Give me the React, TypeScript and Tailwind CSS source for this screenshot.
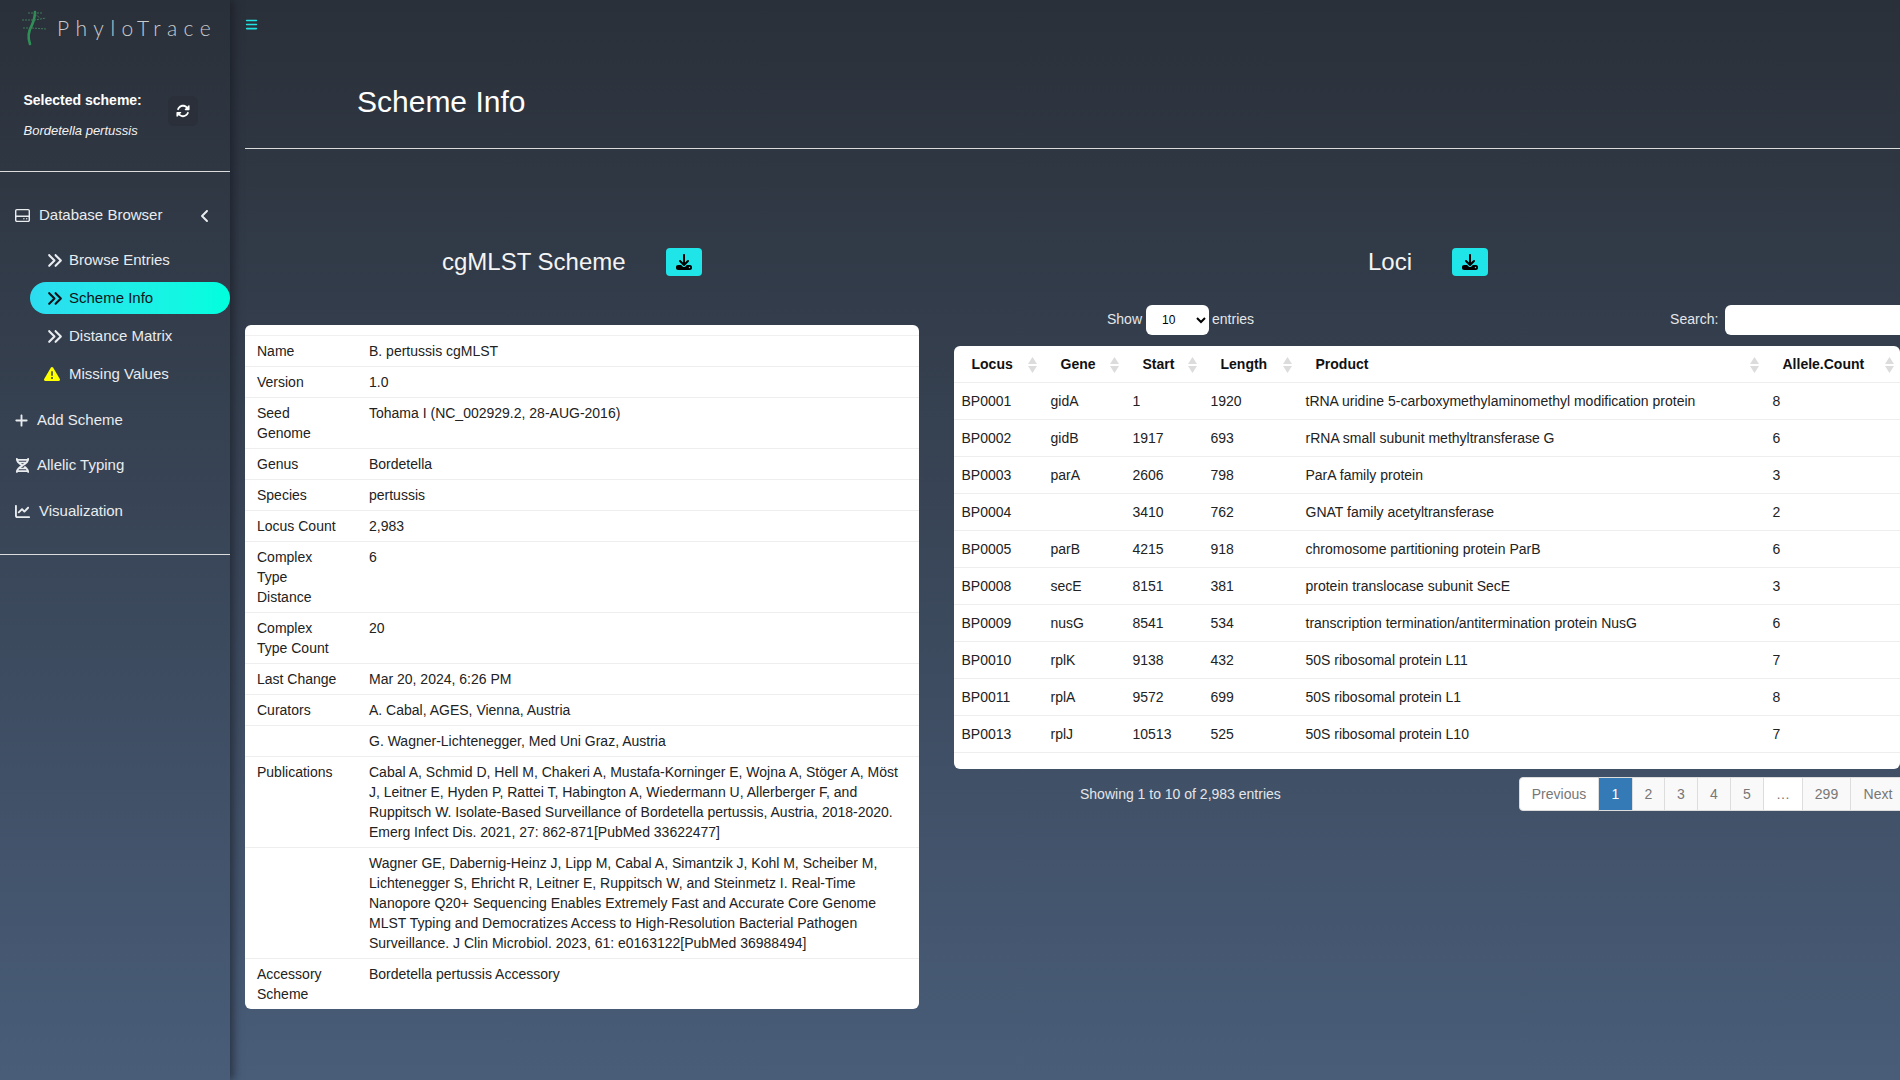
import {
  FaAngleLeft,
  FaAnglesRight,
  FaBars,
  FaChartLine,
  FaDna,
  FaDownload,
  FaPlus,
  FaRegHardDrive,
  FaRotate,
  FaTriangleExclamation,
} from "react-icons/fa6";

const schemeInfo = [
  ["Name", "B. pertussis cgMLST"],
  ["Version", "1.0"],
  ["Seed Genome", "Tohama I (NC_002929.2, 28-AUG-2016)"],
  ["Genus", "Bordetella"],
  ["Species", "pertussis"],
  ["Locus Count", "2,983"],
  ["Complex Type Distance", "6"],
  ["Complex Type Count", "20"],
  ["Last Change", "Mar 20, 2024, 6:26 PM"],
  ["Curators", "A. Cabal, AGES, Vienna, Austria"],
  ["", "G. Wagner-Lichtenegger, Med Uni Graz, Austria"],
  [
    "Publications",
    "Cabal A, Schmid D, Hell M, Chakeri A, Mustafa-Korninger E, Wojna A, Stöger A, Möst J, Leitner E, Hyden P, Rattei T, Habington A, Wiedermann U, Allerberger F, and Ruppitsch W. Isolate-Based Surveillance of Bordetella pertussis, Austria, 2018-2020. Emerg Infect Dis. 2021, 27: 862-871[PubMed 33622477]",
  ],
  [
    "",
    "Wagner GE, Dabernig-Heinz J, Lipp M, Cabal A, Simantzik J, Kohl M, Scheiber M, Lichtenegger S, Ehricht R, Leitner E, Ruppitsch W, and Steinmetz I. Real-Time Nanopore Q20+ Sequencing Enables Extremely Fast and Accurate Core Genome MLST Typing and Democratizes Access to High-Resolution Bacterial Pathogen Surveillance. J Clin Microbiol. 2023, 61: e0163122[PubMed 36988494]",
  ],
  ["Accessory Scheme", "Bordetella pertussis Accessory"],
];

const loci = [
  ["BP0001", "gidA", "1", "1920", "tRNA uridine 5-carboxymethylaminomethyl modification protein", "8"],
  ["BP0002", "gidB", "1917", "693", "rRNA small subunit methyltransferase G", "6"],
  ["BP0003", "parA", "2606", "798", "ParA family protein", "3"],
  ["BP0004", "", "3410", "762", "GNAT family acetyltransferase", "2"],
  ["BP0005", "parB", "4215", "918", "chromosome partitioning protein ParB", "6"],
  ["BP0008", "secE", "8151", "381", "protein translocase subunit SecE", "3"],
  ["BP0009", "nusG", "8541", "534", "transcription termination/antitermination protein NusG", "6"],
  ["BP0010", "rplK", "9138", "432", "50S ribosomal protein L11", "7"],
  ["BP0011", "rplA", "9572", "699", "50S ribosomal protein L1", "8"],
  ["BP0013", "rplJ", "10513", "525", "50S ribosomal protein L10", "7"],
];

const lociColumns = [
  { name: "Locus", width: "w-[89px]" },
  { name: "Gene", width: "w-[82px]" },
  { name: "Start", width: "w-[78px]" },
  { name: "Length", width: "w-[95px]" },
  { name: "Product", width: "w-[467px]" },
  { name: "Allele.Count", width: "w-[135px]" },
];

const subItems = [
  { label: "Browse Entries" },
  { label: "Scheme Info", active: true },
  { label: "Distance Matrix" },
  { label: "Missing Values", warning: true },
];

function Logo() {
  return (
    <svg width="28" height="36" viewBox="0 0 28 36" fill="none" className="shrink-0">
      <path d="M10 34 C7 26 9 20 12 15 C14 10 15 6 15 2" stroke="#2f8f57" strokeWidth="2.6" strokeLinecap="round" />
      <g stroke="#3f7a58" strokeWidth="1" strokeDasharray="2 1">
        <path d="M8 3 H23" />
        <path d="M2 10 H15 L26 8" />
        <path d="M3 18 H12 L26 19" />
        <path d="M15 4 L20 8" />
      </g>
    </svg>
  );
}

function SortIcon() {
  return (
    <svg width="9" height="16" viewBox="0 0 9 16" className="absolute right-[6px] top-[11px]">
      <path d="M4.5 0 L9 7 H0 Z" fill="#dcdcdc" />
      <path d="M4.5 16 L9 9 H0 Z" fill="#dcdcdc" />
    </svg>
  );
}

function DownloadButton() {
  return (
    <button className="flex h-[28px] w-[36px] items-center justify-center rounded bg-[#1fe5e8] text-black">
      <FaDownload size={16} />
    </button>
  );
}

function Sidebar() {
  return (
    <aside className="relative z-10 h-full w-[230px] shrink-0 text-[#e9ecef] shadow-[4px_0_8px_rgba(20,24,32,0.55)]">
      <div className="flex h-[50px] items-start pl-[20px] pt-[10px]">
        <Logo />
        <span className="ml-[9px] mt-[5px] font-['Lato',sans-serif] text-[21px] font-light leading-[25px] tracking-[6.5px] text-[#c9cbce]">
          PhyloTrace
        </span>
      </div>

      <div className="flex h-[122px] border-b border-[#dcdcdc] pl-[23.5px] pt-[41px]">
        <div className="w-[144.5px]">
          <div className="text-sm leading-[18px] font-bold text-white">Selected scheme:</div>
          <div className="mt-[13px] text-[13px] leading-[18px] text-[#f2f2f2] italic">Bordetella pertussis</div>
        </div>
        <button className="mt-[5px] flex h-[30px] w-[30px] items-center justify-center rounded-md bg-[#2a2f39] text-white">
          <FaRotate size={14} />
        </button>
      </div>

      <nav className="border-b border-[#dcdcdc] pb-[20px] pt-[21px] text-[15px]">
        <div className="flex h-[45px] items-center pl-[15px]">
          <FaRegHardDrive size={15} className="shrink-0" />
          <span className="ml-[9px]">Database Browser</span>
          <FaAngleLeft size={16} className="ml-[35px]" />
        </div>

        <ul className="mt-[3px]">
          {subItems.map((item) => (
            <li key={item.label} className="flex h-[38px] items-center">
              <div
                className={
                  item.active
                    ? "ml-[30px] flex h-[32px] w-[200px] items-center rounded-full bg-linear-to-r from-[#2cdcf0] to-[#00ffdd] pl-[16px] text-[#10141a]"
                    : "ml-[30px] flex h-[32px] w-[200px] items-center pl-[16px]"
                }
              >
                <span className="flex w-[23px] shrink-0 items-center">
                  {item.warning ? (
                    <FaTriangleExclamation size={16} className="-ml-[2px] text-[#ffff00]" />
                  ) : (
                    <FaAnglesRight size={17} />
                  )}
                </span>
                {item.label}
              </div>
            </li>
          ))}
        </ul>

        <div className="mt-[5px] flex h-[45px] items-center pl-[15px]">
          <FaPlus size={15} className="-ml-[1px] shrink-0" />
          <span className="ml-[8px]">Add Scheme</span>
        </div>
        <div className="flex h-[45px] items-center pl-[15px]">
          <FaDna size={15} className="shrink-0" />
          <span className="ml-[7px]">Allelic Typing</span>
        </div>
        <div className="flex h-[46px] items-center pl-[15px]">
          <FaChartLine size={15} className="shrink-0" />
          <span className="ml-[9px]">Visualization</span>
        </div>
      </nav>
    </aside>
  );
}

function SchemeCard() {
  return (
    <div className="mt-[49px] rounded-md bg-white pt-[10px] text-sm leading-5 text-[#222]">
      <table className="w-full table-fixed border-collapse">
        <colgroup>
          <col className="w-[112px]" />
          <col />
        </colgroup>
        <tbody>
          {schemeInfo.map(([label, value], i) => (
            <tr key={i} className="border-t border-[#eeeeee] first:border-t-[#f0f0f0]">
              <td className="py-[5px] pl-[12px] pr-[12px] align-top">{label}</td>
              <td className="py-[5px] pl-[12px] pr-[12px] align-top">{value}</td>
            </tr>
          ))}
        </tbody>
      </table>
    </div>
  );
}

function LociCard() {
  return (
    <div className="mt-[11px] rounded-md bg-white pb-[16px] text-sm leading-5 text-[#222]">
      <table className="w-full table-fixed border-collapse">
        <colgroup>
          {lociColumns.map((c) => (
            <col key={c.name} className={c.width} />
          ))}
        </colgroup>
        <thead>
          <tr className="h-[36px] border-b border-[#eeeeee]">
            {lociColumns.map((c) => (
              <th key={c.name} className="relative pl-[17.5px] text-left font-bold text-[#111]">
                {c.name}
                <SortIcon />
              </th>
            ))}
          </tr>
        </thead>
        <tbody>
          {loci.map((row) => (
            <tr key={row[0]} className="border-b border-[#eeeeee]">
              {row.map((cell, i) => (
                <td key={i} className="h-[37px] px-[7.5px] py-0">
                  {cell}
                </td>
              ))}
            </tr>
          ))}
        </tbody>
      </table>
    </div>
  );
}

function Pagination() {
  const pages = [
    { label: "Previous", style: "w-[80px] rounded-l bg-white text-[#777]" },
    { label: "1", style: "w-[34px] border-[#337ab7] bg-[#337ab7] text-white" },
    { label: "2", style: "w-[32px] bg-[#f9f9f9] text-[#777]" },
    { label: "3", style: "w-[33px] bg-[#f9f9f9] text-[#777]" },
    { label: "4", style: "w-[33px] bg-[#f9f9f9] text-[#777]" },
    { label: "5", style: "w-[33px] bg-[#f9f9f9] text-[#777]" },
    { label: "…", style: "w-[39px] bg-white text-[#777]" },
    { label: "299", style: "w-[48px] bg-[#f9f9f9] text-[#777]" },
    { label: "Next", style: "w-[55px] bg-[#f9f9f9] text-[#777]" },
  ];
  return (
    <div className="flex shrink-0">
      {pages.map((p) => (
        <span
          key={p.label}
          className={`flex h-[34px] shrink-0 items-center justify-center border-y border-r border-[#dddddd] text-sm first:border-l ${p.style}`}
        >
          {p.label}
        </span>
      ))}
    </div>
  );
}

export default function App() {
  return (
    <div className="flex h-screen w-full overflow-hidden bg-linear-to-b from-[#2a3039] to-[#495d79] font-['Liberation_Sans',Arial,sans-serif]">
      <Sidebar />

      <main className="min-w-0 flex-1 overflow-hidden">
        <div className="flex h-[50px] items-center pb-[2px] pl-[15px]">
          <FaBars size={13} className="text-[#20e3e3]" />
        </div>

        <div className="ml-[15px] border-b border-[#dcdcdc] pb-[28px] pl-[112px] pt-[34px]">
          <h1 className="text-[30px] leading-[36px] text-white">Scheme Info</h1>
        </div>

        <div className="flex gap-[35px] pl-[15px] pt-[99px]">
          <section className="w-[674px] shrink-0">
            <div className="flex h-[28px] items-center gap-[40px] pl-[197px]">
              <h2 className="text-2xl text-[#f4f4f4]">cgMLST Scheme</h2>
              <DownloadButton />
            </div>
            <SchemeCard />
          </section>

          <section className="w-[946px] shrink-0">
            <div className="flex h-[28px] items-center gap-[40px] pl-[414px]">
              <h2 className="text-2xl text-[#f4f4f4]">Loci</h2>
              <DownloadButton />
            </div>

            <div className="mt-[29px] flex h-[30px] items-center text-sm text-[#e4e6e9]">
              <span className="-mt-[2px] ml-[153px]">Show</span>
              <select className="ml-[4px] h-[30px] w-[63px] shrink-0 rounded-md bg-white pl-[12px] text-xs text-black">
                <option>10</option>
              </select>
              <span className="-mt-[2px] ml-[3px]">entries</span>
              <span className="-mt-[2px] ml-[416px]">Search:</span>
              <input className="ml-[7px] h-[30px] w-[190px] shrink-0 rounded-l-md bg-white" />
            </div>

            <LociCard />

            <div className="mt-[8px] flex items-center">
              <div className="w-[565px] shrink-0 pl-[126px] text-sm text-[#e4e6e9]">
                Showing 1 to 10 of 2,983 entries
              </div>
              <Pagination />
            </div>
          </section>
        </div>
      </main>
    </div>
  );
}
